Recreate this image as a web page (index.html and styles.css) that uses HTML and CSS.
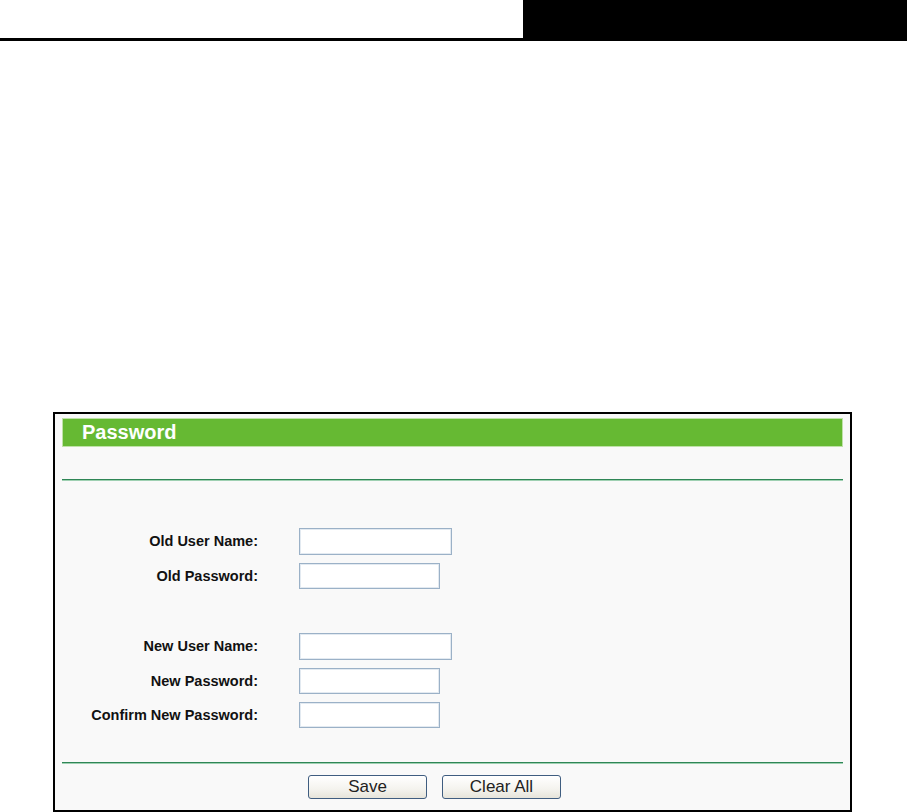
FILE: index.html
```html
<!DOCTYPE html>
<html lang="en">
<head>
  <meta charset="UTF-8" />
  <title>Password</title>
  <link rel="stylesheet" href="styles.css">
</head>
<body>
  <div class="topbar">
    <div class="topbar-rule"></div>
    <div class="topbar-tab"></div>
  </div>

  <div class="panel">
    <div class="panel-title">Password</div>
    <div class="rule rule-top"></div>

    <form class="form-grid">
      <label>Old User Name:</label>
      <input type="text" class="wide" />

      <label>Old Password:</label>
      <input type="password" />

      <div class="spacer"></div>

      <label>New User Name:</label>
      <input type="text" class="wide" />

      <label>New Password:</label>
      <input type="password" />

      <label>Confirm New Password:</label>
      <input type="password" />
    </form>

    <div class="rule rule-bottom"></div>

    <div class="buttons">
      <button type="button">Save</button>
      <button type="button">Clear All</button>
    </div>
  </div>
</body>
</html>
```

FILE: styles.css
```css
body {
  margin: 0;
  padding: 0;
  background-color: white;
  font-family: 'Liberation Sans', Arial, sans-serif;
}

.topbar {
  display: flex;
  height: 41px;
}

.topbar-rule {
  flex: 0 0 523px;
  border-bottom: 3px solid #000;
}

.topbar-tab {
  flex: 1;
  background-color: #000;
}

.panel {
  box-sizing: border-box;
  width: 799px;
  height: 400px;
  margin: 371px 0 0 53px;
  padding: 4px 7px 0 7px;
  border: 2px solid #000;
  background-color: #f9f9f9;
}

.panel-title {
  box-sizing: border-box;
  height: 29px;
  padding-left: 19px;
  background-color: #66b933;
  border: 1px solid #bfe2a8;
  color: white;
  font-size: 20px;
  font-weight: bold;
  line-height: 26px;
}

.rule {
  height: 0;
  border-top: 1px solid #2f8656;
  border-bottom: 1px solid #9fd0b2;
}

.rule-top {
  margin-top: 32px;
}

.form-grid {
  display: grid;
  grid-template-columns: 196px 1fr;
  grid-template-rows: 34.5px 34.5px 36px 34.5px 34.5px 34.5px;
  column-gap: 41px;
  align-items: center;
  margin: 43px 0 0 0;
}

.form-grid label {
  text-align: right;
  font-size: 14.5px;
  font-weight: bold;
  color: #111;
}

.form-grid input {
  box-sizing: border-box;
  width: 141px;
  height: 26px;
  margin: 0;
  border: 1px solid #9bb1c7;
  box-shadow: inset 0 0 0 1px #e3eaf1;
  background-color: white;
}

.form-grid input.wide {
  width: 153px;
  height: 27px;
}

.spacer {
  grid-column: 1 / 3;
}

.rule-bottom {
  margin-top: 29px;
}

.buttons {
  display: flex;
  gap: 15px;
  padding-left: 246px;
  margin-top: 11px;
}

.buttons button {
  width: 119px;
  height: 24px;
  padding: 0;
  border: 1px solid #3f5d80;
  border-radius: 3px;
  background: linear-gradient(#ffffff, #f4f3ee 60%, #e6e4da);
  font-family: 'Liberation Sans', Arial, sans-serif;
  font-size: 17px;
  color: #222;
}
```
